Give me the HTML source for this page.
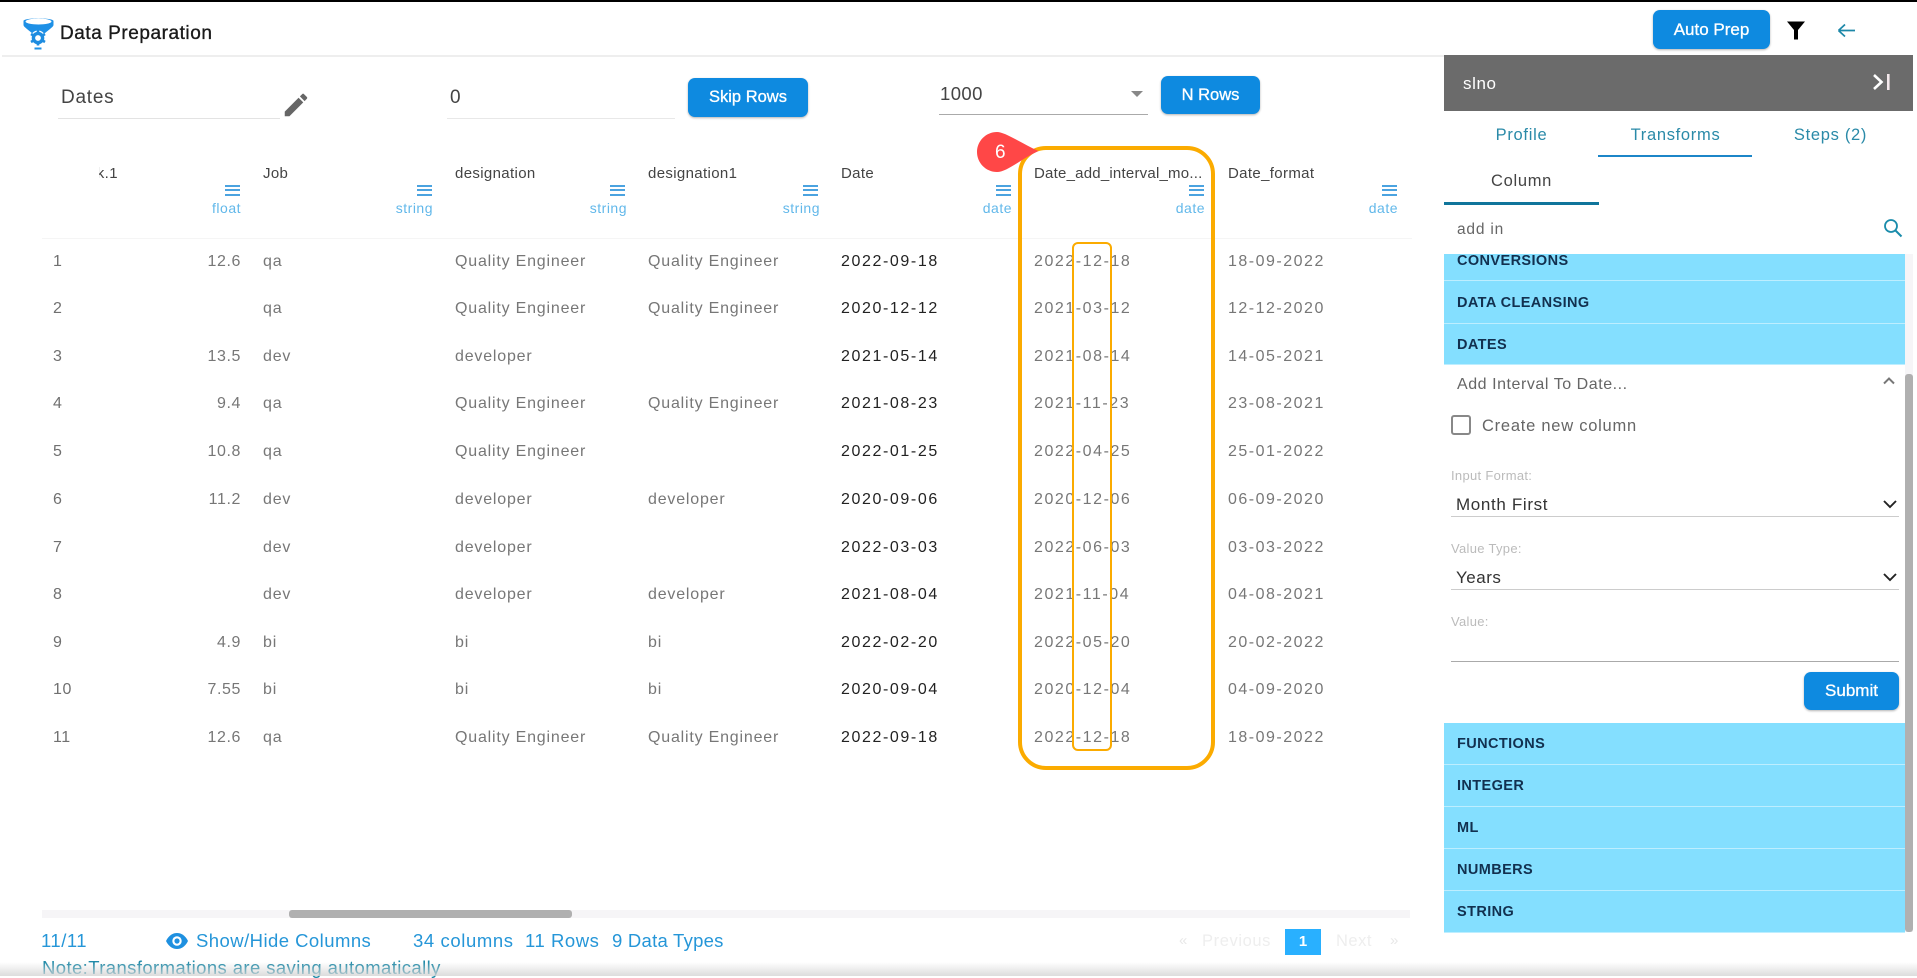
<!DOCTYPE html>
<html><head><meta charset="utf-8"><title>Data Preparation</title>
<style>
*{box-sizing:border-box}
html,body{margin:0;padding:0;background:#fff}
body{width:1917px;height:976px;position:relative;overflow:hidden;font-family:"Liberation Sans",sans-serif}
.a{position:absolute}
.t{position:absolute;white-space:nowrap;line-height:20px;height:20px}
.row{position:absolute;left:0;width:1440px;height:20px;font-size:16px;line-height:20px;color:#777}
.row span{position:absolute;top:0;white-space:nowrap;letter-spacing:.8px}
.row .i{left:53px;top:0;letter-spacing:.6px;color:#707070}
.row .n{right:1199px;letter-spacing:.6px}
.j{left:263px}.d1{left:455px}.d2{left:648px}
.row .dt{left:841px;color:#222;letter-spacing:1.6px}
.row .da{left:1034px;letter-spacing:1.55px}
.row .df{left:1228px;letter-spacing:1.5px}
.h{position:absolute;top:164px;font-size:15px;line-height:20px;color:#444;letter-spacing:.35px;white-space:nowrap}
.ty{position:absolute;top:199px;font-size:14px;line-height:18px;color:#62b8ea;letter-spacing:.5px;white-space:nowrap}
.hb{position:absolute;top:185px;width:15px;height:11px;border-top:2px solid #4ba3e0;border-bottom:2px solid #4ba3e0}
.hb:after{content:"";position:absolute;left:0;right:0;top:2px;height:2px;background:#4ba3e0}
.btn{position:absolute;background:#0e8ae0;border-radius:7px;color:#fff;text-align:center;box-shadow:0 1px 2px rgba(0,0,0,.3);font-size:17px;-webkit-text-stroke:.3px #fff}
.bar{position:absolute;left:1444px;width:461px;background:#84dfff;font-weight:700;color:#12304f;font-size:14.5px;letter-spacing:.4px;padding-left:13px;box-shadow:0 1px 0 #bdeeff}
.lb{position:absolute;left:1451px;font-size:13px;color:#bbb;letter-spacing:.3px;line-height:16px;white-space:nowrap}
.ln{position:absolute;left:1451px;width:448px;height:1px;background:#ccc}
.tab{position:absolute;font-size:16.5px;line-height:20px;color:#2a8aa8;text-align:center;letter-spacing:.7px;white-space:nowrap}
.ft{position:absolute;top:931px;font-size:18.5px;line-height:20px;color:#2596d8;white-space:nowrap}
</style></head><body>

<div class="a" style="left:0;top:0;width:1917px;height:2px;background:#000"></div>
<div class="a" style="left:2px;top:55px;width:1442px;height:2px;background:#eee"></div>

<svg class="a" style="left:22px;top:16px" width="34" height="36" viewBox="0 0 34 36">
<path d="M1.500 5 C1.500 1.500 31.500 1.500 31.500 5 L31.500 9 C31.500 11 25 15 22 18 L11 18 C8 15 1.500 11 1.500 9Z" fill="#1e90e6"/>
<ellipse cx="16.500" cy="5.500" rx="13" ry="3" fill="#fff"/>
<circle cx="16" cy="22" r="7.500" fill="#fff"/>
<circle cx="16" cy="22" r="4.600" fill="none" stroke="#1e8ce0" stroke-width="3.400"/>
<path d="M16 14.500v3M16 26.500v3M9 18l2.500 1.500M20.500 24.500l2.500 1.500M9 26l2.500-1.500M20.500 19.500l2.500-1.500" stroke="#1e8ce0" stroke-width="2.600"/>
<rect x="12.500" y="31.500" width="7" height="2" fill="#1e90e6"/>
</svg>
<div class="t" style="left:60px;top:24px;font-size:19px;letter-spacing:.55px;color:#1a1a1a;-webkit-text-stroke:.35px #1a1a1a">Data Preparation</div>

<div class="t" style="left:61px;top:88px;font-size:19px;letter-spacing:.75px;color:#444">Dates</div>
<div class="a" style="left:58px;top:118px;width:222px;height:1px;background:#e3e3e3"></div>
<svg class="a" style="left:281px;top:90px" width="30" height="30" viewBox="0 0 24 24"><path d="M3 17.250V21h3.750L17.810 9.940l-3.750-3.750L3 17.250zM20.710 7.040a1 1 0 0 0 0-1.410l-2.340-2.340a1 1 0 0 0-1.410 0l-1.830 1.830 3.750 3.750 1.830-1.830z" fill="#666"/></svg>
<div class="t" style="left:450px;top:88px;font-size:19px;color:#444">0</div>
<div class="a" style="left:447px;top:118px;width:228px;height:1px;background:#e8e8e8"></div>
<div class="btn" style="left:688px;top:78px;width:120px;height:39px;line-height:39px;font-size:16.5px">Skip Rows</div>
<div class="t" style="left:940px;top:84px;font-size:18.5px;letter-spacing:.4px;color:#444">1000</div>
<div class="a" style="left:1131px;top:91px;width:0;height:0;border-left:6px solid transparent;border-right:6px solid transparent;border-top:6px solid #888"></div>
<div class="a" style="left:939px;top:114px;width:209px;height:1px;background:#aaa"></div>
<div class="btn" style="left:1161px;top:76px;width:99px;height:38px;line-height:39px;font-size:16.5px">N Rows</div>

<div class="btn" style="left:1653px;top:10px;width:117px;height:39px;line-height:40px">Auto Prep</div>
<svg class="a" style="left:1786px;top:20px" width="20" height="20" viewBox="0 0 20 20"><path d="M1 1.500H19L12 10V19.500H8V10Z" fill="#000"/></svg>
<svg class="a" style="left:1837px;top:22px" width="20" height="16" viewBox="0 0 20 16"><path d="M1.500 8.500H18M1.500 8.500L8 2.500M1.500 8.500L8 14.500" stroke="#1c87a8" stroke-width="1.700" fill="none"/></svg>

<!-- table header -->
<div class="a" style="left:99px;top:164px;width:20px;height:20px;overflow:hidden"><span style="position:absolute;right:1px;font-size:15px;line-height:20px;color:#444;letter-spacing:.4px">k.1</span></div>
<div class="h" style="left:263px">Job</div>
<div class="h" style="left:455px">designation</div>
<div class="h" style="left:648px">designation1</div>
<div class="h" style="left:841px">Date</div>
<div class="h" style="left:1034px;letter-spacing:.22px">Date_add_interval_mo...</div>
<div class="h" style="left:1228px">Date_format</div>
<div class="hb" style="left:225px"></div><div class="hb" style="left:417px"></div><div class="hb" style="left:610px"></div><div class="hb" style="left:803px"></div><div class="hb" style="left:996px"></div><div class="hb" style="left:1189px"></div><div class="hb" style="left:1382px"></div>
<div class="ty" style="right:1676px">float</div>
<div class="ty" style="right:1484px">string</div>
<div class="ty" style="right:1290px">string</div>
<div class="ty" style="right:1097px">string</div>
<div class="ty" style="right:905px">date</div>
<div class="ty" style="right:712px">date</div>
<div class="ty" style="right:519px">date</div>
<div class="a" style="left:42px;top:238px;width:1370px;height:1px;background:#f5f5f5"></div>

<!-- rows -->
<div class="row" style="top:252px"><span class="i">1</span><span class="n">12.6</span><span class="j">qa</span><span class="d1">Quality Engineer</span><span class="d2">Quality Engineer</span><span class="dt">2022-09-18</span><span class="da">2022-12-18</span><span class="df">18-09-2022</span></div>
<div class="row" style="top:299px"><span class="i">2</span><span class="j">qa</span><span class="d1">Quality Engineer</span><span class="d2">Quality Engineer</span><span class="dt">2020-12-12</span><span class="da">2021-03-12</span><span class="df">12-12-2020</span></div>
<div class="row" style="top:347px"><span class="i">3</span><span class="n">13.5</span><span class="j">dev</span><span class="d1">developer</span><span class="dt">2021-05-14</span><span class="da">2021-08-14</span><span class="df">14-05-2021</span></div>
<div class="row" style="top:394px"><span class="i">4</span><span class="n">9.4</span><span class="j">qa</span><span class="d1">Quality Engineer</span><span class="d2">Quality Engineer</span><span class="dt">2021-08-23</span><span class="da">2021-11-23</span><span class="df">23-08-2021</span></div>
<div class="row" style="top:442px"><span class="i">5</span><span class="n">10.8</span><span class="j">qa</span><span class="d1">Quality Engineer</span><span class="dt">2022-01-25</span><span class="da">2022-04-25</span><span class="df">25-01-2022</span></div>
<div class="row" style="top:490px"><span class="i">6</span><span class="n">11.2</span><span class="j">dev</span><span class="d1">developer</span><span class="d2">developer</span><span class="dt">2020-09-06</span><span class="da">2020-12-06</span><span class="df">06-09-2020</span></div>
<div class="row" style="top:538px"><span class="i">7</span><span class="j">dev</span><span class="d1">developer</span><span class="dt">2022-03-03</span><span class="da">2022-06-03</span><span class="df">03-03-2022</span></div>
<div class="row" style="top:585px"><span class="i">8</span><span class="j">dev</span><span class="d1">developer</span><span class="d2">developer</span><span class="dt">2021-08-04</span><span class="da">2021-11-04</span><span class="df">04-08-2021</span></div>
<div class="row" style="top:633px"><span class="i">9</span><span class="n">4.9</span><span class="j">bi</span><span class="d1">bi</span><span class="d2">bi</span><span class="dt">2022-02-20</span><span class="da">2022-05-20</span><span class="df">20-02-2022</span></div>
<div class="row" style="top:680px"><span class="i">10</span><span class="n">7.55</span><span class="j">bi</span><span class="d1">bi</span><span class="d2">bi</span><span class="dt">2020-09-04</span><span class="da">2020-12-04</span><span class="df">04-09-2020</span></div>
<div class="row" style="top:728px"><span class="i">11</span><span class="n">12.6</span><span class="j">qa</span><span class="d1">Quality Engineer</span><span class="d2">Quality Engineer</span><span class="dt">2022-09-18</span><span class="da">2022-12-18</span><span class="df">18-09-2022</span></div>

<!-- annotations -->
<div class="a" style="left:1018px;top:146px;width:197px;height:624px;border:4px solid #fbab00;border-radius:28px"></div>
<div class="a" style="left:1072px;top:242px;width:40px;height:509px;border:2px solid #fbab00;border-radius:6px"></div>
<svg class="a" style="left:975px;top:130px" width="66" height="44" viewBox="0 0 66 44"><path d="M22 2C30 2 46 13 63.500 21C46 29 32 42 22 42C11 42 2 33 2 22C2 11 11 2 22 2Z" fill="#ff4747"/></svg>
<div class="t" style="left:995px;top:142px;font-size:19px;line-height:22px;height:22px;color:#fff">6</div>

<!-- right panel -->
<div class="a" style="left:1444px;top:55px;width:469px;height:56px;background:#6b6b6b"></div>
<div class="t" style="left:1463px;top:74px;font-size:17px;letter-spacing:.6px;color:#fff">slno</div>
<svg class="a" style="left:1872px;top:73px" width="20" height="18" viewBox="0 0 20 18"><path d="M2 2L9.500 9L2 16" stroke="#fff" stroke-width="2.600" fill="none"/><rect x="15" y="1" width="2.600" height="16" fill="#f4e8ec"/></svg>
<div class="tab" style="left:1444px;top:125px;width:155px">Profile</div>
<div class="tab" style="left:1598px;top:125px;width:155px">Transforms</div>
<div class="tab" style="left:1753px;top:125px;width:155px">Steps (2)</div>
<div class="a" style="left:1598px;top:155px;width:154px;height:2px;background:#1c86c8"></div>
<div class="tab" style="left:1444px;top:171px;width:155px;color:#444">Column</div>
<div class="a" style="left:1444px;top:202px;width:155px;height:3px;background:#10759b"></div>
<div class="t" style="left:1457px;top:220px;font-size:15.5px;letter-spacing:.8px;color:#666">add in</div>
<svg class="a" style="left:1883px;top:218px" width="20" height="20" viewBox="0 0 20 20"><circle cx="8" cy="8" r="6" stroke="#1a8cab" stroke-width="1.800" fill="none"/><path d="M12.500 12.500L18.500 18.500" stroke="#1a8cab" stroke-width="2"/></svg>

<div class="a" style="left:1905px;top:254px;width:8px;height:678px;background:#f6f5f7"></div>
<div class="a" style="left:1905px;top:374px;width:8px;height:558px;background:#b0b0b0;border-radius:3px"></div>

<div class="bar" style="top:254px;height:26px;line-height:14px">CONVERSIONS</div>
<div class="bar" style="top:281px;height:42px;line-height:44px">DATA CLEANSING</div>
<div class="bar" style="top:324px;height:40px;line-height:42px">DATES</div>

<div class="t" style="left:1457px;top:375px;font-size:16px;letter-spacing:.55px;color:#666">Add Interval To Date...</div>
<svg class="a" style="left:1882px;top:376px" width="14" height="10" viewBox="0 0 14 10"><path d="M2 7.500L7 2.500L12 7.500" stroke="#777" stroke-width="2" fill="none"/></svg>
<div class="a" style="left:1451px;top:415px;width:20px;height:20px;border:2px solid #888;border-radius:3px"></div>
<div class="t" style="left:1482px;top:416px;font-size:16.5px;letter-spacing:.75px;color:#666">Create new column</div>

<div class="lb" style="top:468px">Input Format:</div>
<div class="t" style="left:1456px;top:495px;font-size:17px;letter-spacing:.65px;color:#333">Month First</div>
<svg class="a" style="left:1882px;top:498px" width="16" height="12" viewBox="0 0 16 12"><path d="M2 3L8 9L14 3" stroke="#222" stroke-width="1.900" fill="none"/></svg>
<div class="ln" style="top:516px"></div>
<div class="lb" style="top:541px">Value Type:</div>
<div class="t" style="left:1456px;top:568px;font-size:17px;letter-spacing:.5px;color:#333">Years</div>
<svg class="a" style="left:1882px;top:571px" width="16" height="12" viewBox="0 0 16 12"><path d="M2 3L8 9L14 3" stroke="#222" stroke-width="1.900" fill="none"/></svg>
<div class="ln" style="top:589px"></div>
<div class="lb" style="top:614px">Value:</div>
<div class="ln" style="top:661px;background:#aaa"></div>
<div class="btn" style="left:1804px;top:672px;width:95px;height:38px;line-height:38px">Submit</div>

<div class="bar" style="top:723px;height:41px;line-height:42px">FUNCTIONS</div>
<div class="bar" style="top:765px;height:41px;line-height:42px">INTEGER</div>
<div class="bar" style="top:807px;height:41px;line-height:42px">ML</div>
<div class="bar" style="top:849px;height:41px;line-height:42px">NUMBERS</div>
<div class="bar" style="top:891px;height:41px;line-height:42px">STRING</div>

<!-- bottom -->
<div class="a" style="left:42px;top:910px;width:1368px;height:8px;background:#f6f5f7"></div>
<div class="a" style="left:289px;top:910px;width:283px;height:8px;background:#b0b0b0;border-radius:3px"></div>
<div class="ft" style="left:41px;letter-spacing:.5px">11/11</div>
<svg class="a" style="left:165px;top:931px" width="24" height="20" viewBox="0 0 24 20"><path d="M1 10C4 4 8 2 12 2S20 4 23 10C20 16 16 18 12 18S4 16 1 10Z" fill="#1e90e0"/><circle cx="12" cy="10" r="4.700" fill="#fff"/><circle cx="12" cy="10" r="2.600" fill="#1e90e0"/></svg>
<div class="ft" style="left:196px;letter-spacing:.45px">Show/Hide Columns</div>
<div class="ft" style="left:413px;letter-spacing:.6px">34 columns</div>
<div class="ft" style="left:525px;letter-spacing:.55px">11 Rows</div>
<div class="ft" style="left:612px;letter-spacing:.25px">9 Data Types</div>
<div class="ft" style="left:42px;top:958px;color:#1f8aa8;letter-spacing:.4px">Note:Transformations are saving automatically</div>

<div class="t" style="left:1179px;top:931px;font-size:15px;color:#e8e8e8">«</div>
<div class="t" style="left:1202px;top:931px;font-size:16.5px;letter-spacing:.6px;color:#eee">Previous</div>
<div class="a" style="left:1285px;top:929px;width:36px;height:26px;background:#29b0ff;color:#fff;text-align:center;line-height:26px;font-weight:700;font-size:15px">1</div>
<div class="t" style="left:1336px;top:931px;font-size:16.5px;letter-spacing:.5px;color:#eee">Next</div>
<div class="t" style="left:1390px;top:931px;font-size:15px;color:#e8e8e8">»</div>

<div class="a" style="left:0;top:962px;width:1917px;height:14px;background:linear-gradient(to bottom,rgba(255,255,255,0),rgba(214,214,214,.85))"></div>
</body></html>
